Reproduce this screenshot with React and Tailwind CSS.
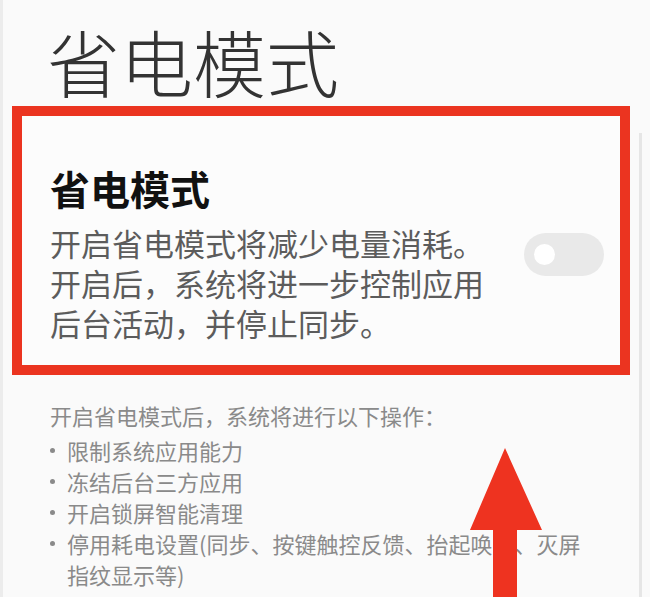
const OPERATIONS = [
  '限制系统应用能力',
  '冻结后台三方应用',
  '开启锁屏智能清理',
  '停用耗电设置(同步、按键触控反馈、抬起唤醒、灭屏指纹显示等)',
];

const Toggle = ({ on = false }) => (
  <div
    className={`flex h-[43px] w-[80px] shrink-0 items-center rounded-full px-[10px] ${
      on ? 'justify-end bg-[#0d84ff]' : 'justify-start bg-[#e9e9e9]'
    }`}
  >
    <div className="h-[21px] w-[21px] rounded-full bg-white" />
  </div>
);

const UpArrow = () => (
  <svg
    className="pointer-events-none absolute left-[465px] top-[446px]"
    width="76"
    height="151"
    viewBox="0 0 76 151"
  >
    <path d="M37 2 L74 84 L49 84 L49 151 L25 151 L25 84 L2 84 Z" fill="#ee3320" />
  </svg>
);

export default function App() {
  return (
    <div className="relative h-[597px] w-full overflow-hidden border-l-[3px] border-[#ececec] bg-[#fafafa] font-['Noto_Sans_CJK_SC','Noto_Sans',sans-serif]">
      {/* page title */}
      <h1 className="pl-[44px] pt-[24px] text-[73px] font-light leading-[72px] text-[#333]">
        省电模式
      </h1>

      {/* highlighted setting row */}
      <div className="ml-[9px] mr-[20px] mt-[10px] flex items-center justify-between border-[10px] border-[#eb3420] bg-[#fcfcfc] pb-[22px] pl-[28px] pr-[16px] pt-[48px]">
        <div>
          <h2 className="text-[40px] font-bold leading-[48px] text-[#111]">省电模式</h2>
          <p className="mt-[11px] text-[31px] leading-[40px] text-[#5c5c5c]">
            开启省电模式将减少电量消耗。
            <br />
            开启后，系统将进一步控制应用
            <br />
            后台活动，并停止同步。
          </p>
        </div>
        <div className="mt-[2px]">
          <Toggle />
        </div>
      </div>

      {/* what the mode does */}
      <div className="mt-[24px] pl-[47px] pr-[54px] text-[22px] text-[#8a8a8a]">
        <p className="leading-[32px]">开启省电模式后，系统将进行以下操作：</p>
        <ul className="mt-[4px]">
          {OPERATIONS.map((item) => (
            <li key={item} className="flex items-start leading-[31px]">
              <span className="flex h-[31px] w-[17px] shrink-0 items-center">
                <span className="h-[5px] w-[5px] rounded-full bg-[#8a8a8a]" />
              </span>
              <span>{item}</span>
            </li>
          ))}
        </ul>
      </div>

      {/* scroll track on the right edge */}
      <div className="absolute bottom-0 right-[8px] top-[133px] w-[3px] bg-[#e6e6e6]" />

      <UpArrow />
    </div>
  );
}
